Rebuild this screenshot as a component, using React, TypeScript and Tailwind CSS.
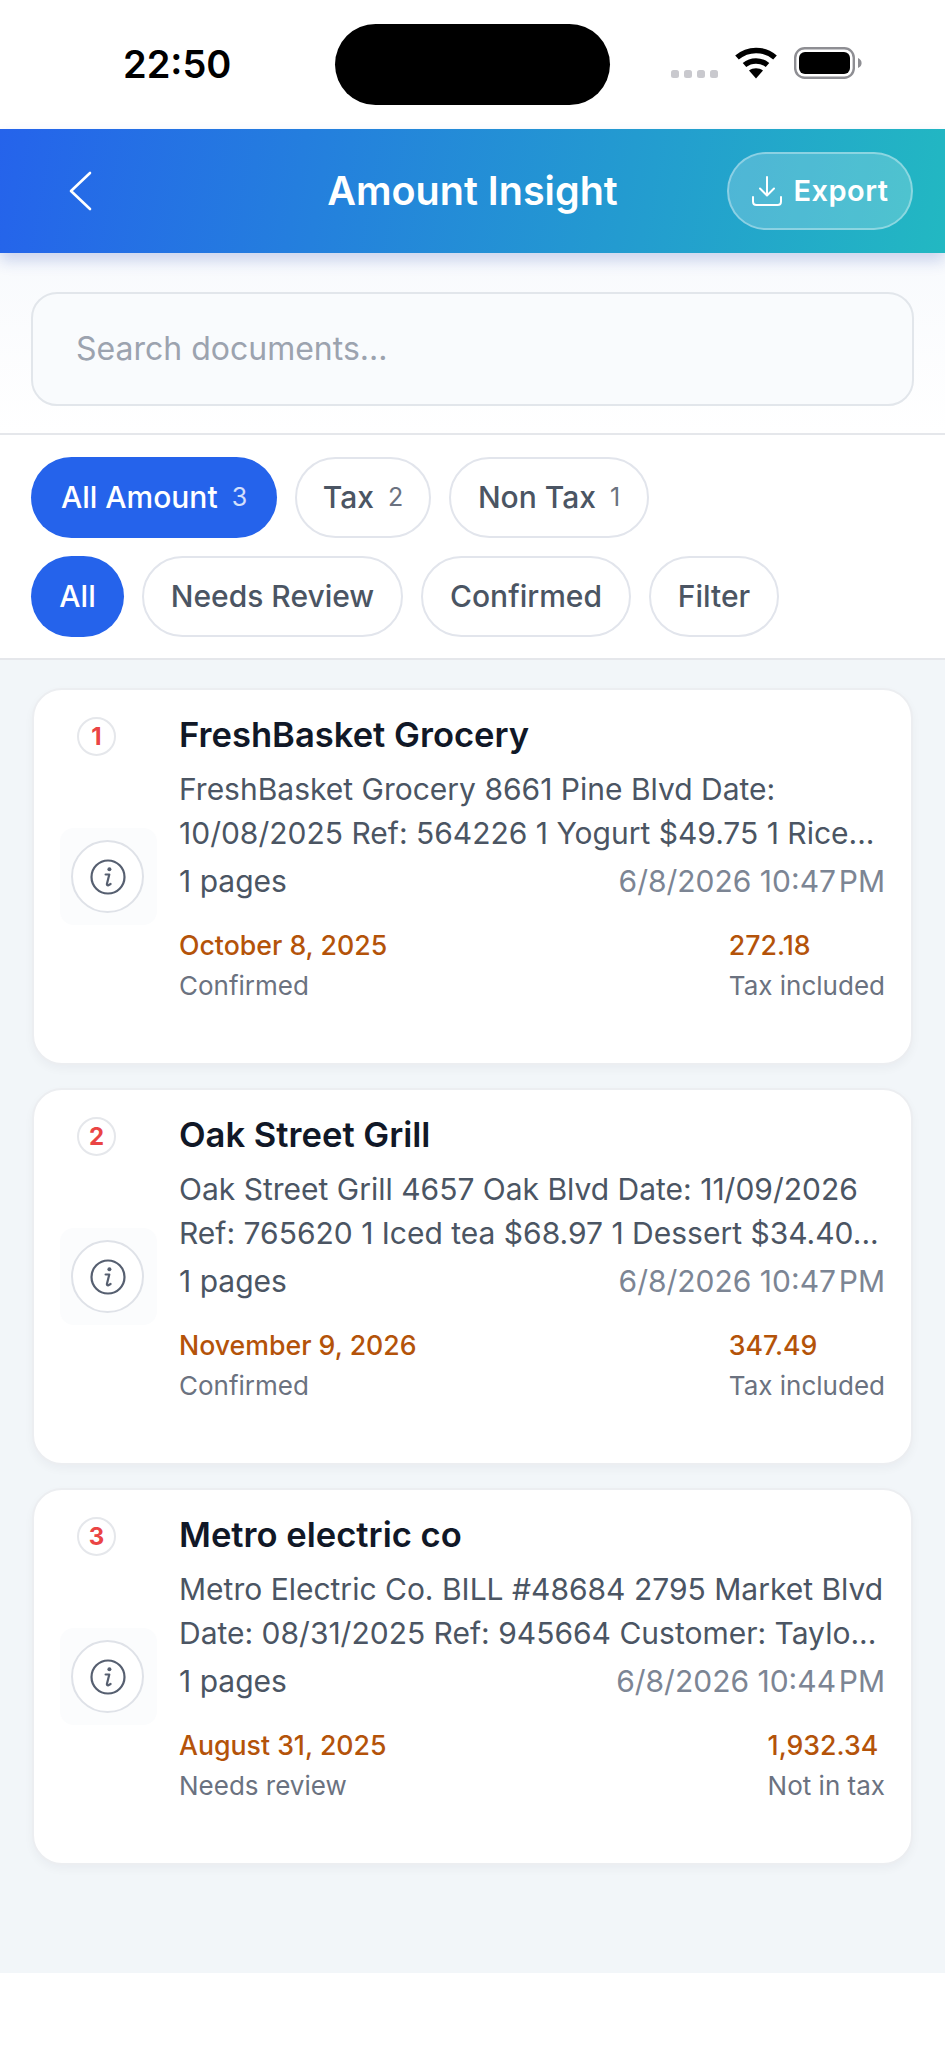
const docs = [
  {
    id: 1,
    title: "FreshBasket Grocery",
    lines: ["FreshBasket Grocery 8661 Pine Blvd Date:", "10/08/2025 Ref: 564226 1 Yogurt $49.75 1 Rice..."],
    time: "6/8/2026 10:47\u200aPM",
    date: "October 8, 2025",
    status: "Confirmed",
    amount: "272.18",
    tax: "Tax included",
  },
  {
    id: 2,
    title: "Oak Street Grill",
    lines: ["Oak Street Grill 4657 Oak Blvd Date: 11/09/2026", "Ref: 765620 1 Iced tea $68.97 1 Dessert $34.40..."],
    time: "6/8/2026 10:47\u200aPM",
    date: "November 9, 2026",
    status: "Confirmed",
    amount: "347.49",
    tax: "Tax included",
  },
  {
    id: 3,
    title: "Metro electric co",
    lines: ["Metro Electric Co. BILL #48684 2795 Market Blvd", "Date: 08/31/2025 Ref: 945664 Customer: Taylo..."],
    time: "6/8/2026 10:44\u200aPM",
    date: "August 31, 2025",
    status: "Needs review",
    amount: "1,932.34",
    tax: "Not in tax",
  },
];

const StatusBar = () => (
  <div className="relative h-[129px] bg-white">
    <span className="absolute left-[123px] top-[41px] text-[38px] leading-[46px] font-semibold text-black">
      22:50
    </span>
    <div className="absolute left-[335px] top-[24px] h-[81px] w-[275px] rounded-[41px] bg-black" />
    <div className="absolute left-[671px] top-[70px] flex gap-[5px]">
      {[1, 2, 3, 4].map((i) => (
        <div key={i} className="h-[8px] w-[8px] rounded-[2.5px] bg-[#c9c9ce]" />
      ))}
    </div>
    <svg className="absolute left-[734px] top-[46px]" width="44" height="33" viewBox="0 0 44 33" fill="none">
      <path d="M3 11.5C14 2 30 2 41 11.5" stroke="#000" strokeWidth="5.5" />
      <path d="M10.5 19C17 13.6 27 13.6 33.5 19" stroke="#000" strokeWidth="5.5" />
      <path d="M15 24.5C19 21.6 25 21.6 29 24.5L22 32.5Z" fill="#000" />
    </svg>
    <svg className="absolute left-[794px] top-[47px]" width="68" height="32" viewBox="0 0 68 32" fill="none">
      <rect x="1.2" y="1.2" width="58.6" height="29.6" rx="9.5" stroke="#8e8e93" strokeWidth="2.4" />
      <rect x="5" y="5" width="51" height="22" rx="6" fill="#000" />
      <path d="M64 11C66.5 12 67.6 14 67.6 16C67.6 18 66.5 20 64 21Z" fill="#8e8e93" />
    </svg>
  </div>
);

const Header = () => (
  <header className="relative z-10 flex h-[124px] items-center justify-between bg-[linear-gradient(100deg,#2563eb_0%,#22b8c2_100%)] pl-[68px] pr-[32px] shadow-[0_8px_14px_rgba(30,64,175,0.2)]">
    <svg width="24" height="40" viewBox="0 0 24 40" fill="none">
      <path d="M22 2L3 20L22 38" stroke="#fff" strokeWidth="2.6" strokeLinecap="round" strokeLinejoin="round" />
    </svg>
    <h1 className="absolute left-0 right-0 text-center text-[39.5px] leading-[48px] font-semibold text-white">Amount Insight</h1>
    <button className="relative flex h-[78px] w-[186px] items-center justify-center gap-[10px] rounded-full border-2 border-white/35 bg-white/20 text-[29px] font-semibold tracking-[0.5px] text-white">
      <svg width="32" height="32" viewBox="0 0 32 32" fill="none" stroke="#fff" strokeWidth="2" strokeLinecap="round" strokeLinejoin="round">
        <path d="M16 2V20M9 13.5L16 20.5L23 13.5" />
        <path d="M2 22V26.5C2 28.5 3.5 30 5.5 30H26.5C28.5 30 30 28.5 30 26.5V22" />
      </svg>
      Export
    </button>
  </header>
);

const Pill = ({ label, count, active, width }: { label: string; count?: number; active?: boolean; width: string }) => (
  <div
    className={`flex h-[81px] items-center justify-center rounded-full text-[30px] font-medium ${width} ${
      active ? "bg-[#2563eb] text-white" : "border-2 border-[#e2e5ec] bg-white text-[#4b5563]"
    }`}>
    {label}
    {count !== undefined && (
      <span className={`ml-[14px] text-[25px] font-normal ${active ? "text-white/80" : "text-[#6b7280]"}`}>{count}</span>
    )}
  </div>
);

const Card = ({ doc }: { doc: (typeof docs)[number] }) => (
  <div className="relative flex h-[377px] items-center rounded-[30px] border-2 border-[#eceef1] bg-white px-[26px] shadow-[0_4px_10px_rgba(15,23,42,0.04)]">
    <div className="absolute left-[43px] top-[27px] flex h-[39px] w-[39px] items-center justify-center rounded-full border-2 border-[#e5e7eb] bg-white text-[24px] font-bold text-[#ea4444]">
      {doc.id}
    </div>
    <div className="flex h-[97px] w-[97px] shrink-0 items-center justify-center rounded-[14px] bg-[#fbfcfd]">
      <div className="mr-[2px] flex h-[73px] w-[73px] items-center justify-center rounded-full border-2 border-[#dfe2e8] bg-white">
        <svg width="36" height="36" viewBox="0 0 36 36" fill="none">
          <circle cx="18" cy="18" r="16.5" stroke="#565f70" strokeWidth="2.2" />
          <circle cx="19.4" cy="10.3" r="2" fill="#565f70" />
          <path d="M15.6 15.5H19.3L16.9 25C16.7 26 17.5 26.6 18.4 26.2L20.6 25" stroke="#565f70" strokeWidth="2.2" strokeLinecap="round" strokeLinejoin="round" />
        </svg>
      </div>
    </div>
    <div className="ml-[22px] flex h-full min-w-0 flex-1 flex-col pt-[22px]">
      <h2 className="text-[34.6px] leading-[44px] font-semibold text-[#111827]">{doc.title}</h2>
      <p className="mt-[11px] text-[30px] leading-[44px] whitespace-nowrap text-[#4b5563]">
        {doc.lines.map((line) => (
          <span key={line} className="block">
            {line}
          </span>
        ))}
      </p>
      <div className="mt-[4px] flex items-center justify-between text-[30px] leading-[44px]">
        <span className="text-[#4b5563]">1 pages</span>
        <span className="text-[#7c8594]">{doc.time}</span>
      </div>
      <div className="mt-[24px] flex justify-between text-[26.7px] leading-[36px]">
        <div>
          <div className="font-medium text-[#b45309]">{doc.date}</div>
          <div className="mt-[5px] text-[26px] text-[#6b7280]">{doc.status}</div>
        </div>
        <div>
          <div className="font-medium text-[#b45309]">{doc.amount}</div>
          <div className="mt-[5px] text-[26px] text-[#6b7280]">{doc.tax}</div>
        </div>
      </div>
    </div>
  </div>
);

export default function App() {
  return (
    <div className="h-[2048px] overflow-hidden bg-white font-['Inter',sans-serif]">
      <StatusBar />
      <Header />
      <div className="h-[182px] border-b-2 border-[#e5e7eb] bg-gradient-to-b from-[#f8fafd] to-white px-[31px] pt-[39px]">
        <div className="flex h-[114px] items-center rounded-[26px] border-2 border-[#e2e6eb] bg-[#f9fbfd] pl-[43px] text-[32px] text-[#9ca3af]">
          Search documents...
        </div>
      </div>
      <div className="flex h-[225px] flex-col gap-[18px] border-b-2 border-[#e5e7eb] bg-white px-[31px] pt-[22px]">
        <div className="flex gap-[18px]">
          <Pill label="All Amount" count={3} active width="w-[246px]" />
          <Pill label="Tax" count={2} width="w-[136px]" />
          <Pill label="Non Tax" count={1} width="w-[200px]" />
        </div>
        <div className="flex gap-[18px]">
          <Pill label="All" active width="w-[93px]" />
          <Pill label="Needs Review" width="w-[261px]" />
          <Pill label="Confirmed" width="w-[210px]" />
          <Pill label="Filter" width="w-[130px]" />
        </div>
      </div>
      <div className="flex h-[1313px] flex-col gap-[23px] bg-[#f2f6f9] px-[32px] pt-[28px]">
        {docs.map((doc) => (
          <Card key={doc.id} doc={doc} />
        ))}
      </div>
    </div>
  );
}
